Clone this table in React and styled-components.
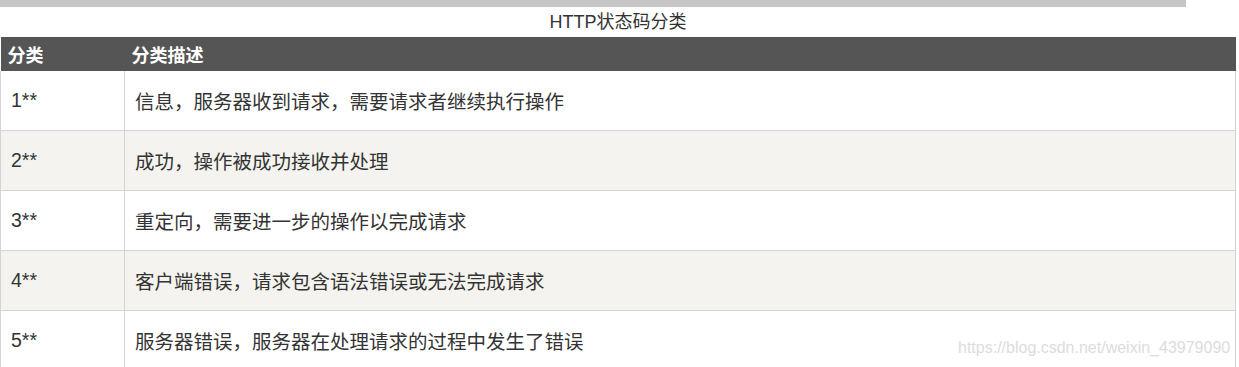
import React from "react";
import styled, { createGlobalStyle } from "styled-components";

const GlobalStyle = createGlobalStyle`
  body {
    margin: 0;
    background: #fff;
    font-family: "Liberation Sans", "Noto Sans CJK SC", sans-serif;
    color: #333;
  }
`;

const rows = [
  { code: "1**", desc: "信息，服务器收到请求，需要请求者继续执行操作" },
  { code: "2**", desc: "成功，操作被成功接收并处理" },
  { code: "3**", desc: "重定向，需要进一步的操作以完成请求" },
  { code: "4**", desc: "客户端错误，请求包含语法错误或无法完成请求" },
  { code: "5**", desc: "服务器错误，服务器在处理请求的过程中发生了错误" },
];

const Page = () => {
  return (
    <>
      <GlobalStyle />
      <Wrapper>
        <TopBar />
        <Caption>HTTP状态码分类</Caption>
        <Table>
          <colgroup>
            <col style={{ width: 124 }} />
            <col />
          </colgroup>
          <thead>
            <tr>
              <Th>分类</Th>
              <Th>分类描述</Th>
            </tr>
          </thead>
          <tbody>
            {rows.map((item, index) => (
              <Row key={index} $striped={index % 2 === 1}>
                <Td>{item.code}</Td>
                <Td>{item.desc}</Td>
              </Row>
            ))}
          </tbody>
        </Table>
        <Watermark>https://blog.csdn.net/weixin_43979090</Watermark>
      </Wrapper>
    </>
  );
};

const Wrapper = styled.div`
  position: relative;
  width: 1239px;
  height: 367px;
  overflow: hidden;
`;

const TopBar = styled.div`
  width: 1186px;
  height: 7px;
  background: #c6c6c6;
`;

const Caption = styled.div`
  height: 30px;
  line-height: 30px;
  width: 1236px;
  text-align: center;
  font-size: 18px;
  color: #333;
`;

const Table = styled.table`
  width: 1236px;
  border-collapse: collapse;
  table-layout: fixed;
`;

const Th = styled.th`
  height: 34px;
  padding: 0 7px;
  box-sizing: border-box;
  background: #555;
  color: #fff;
  font-size: 18px;
  font-weight: bold;
  text-align: left;
  vertical-align: middle;
  border: 0;
`;

const Row = styled.tr`
  background: ${(p) => (p.$striped ? "#f4f3ef" : "#fff")};

  &:first-child td {
    border-top: 0;
    height: 59px;
  }
`;

const Td = styled.td`
  height: 60px;
  box-sizing: border-box;
  padding: 0 10px;
  font-size: 19.5px;
  color: #333;
  vertical-align: middle;
  border: 1px solid #d4d4d4;
`;

const Watermark = styled.div`
  position: absolute;
  left: 958px;
  top: 338px;
  font-size: 16px;
  line-height: 20px;
  color: #dcdcdc;
  white-space: nowrap;
`;

export default Page;
